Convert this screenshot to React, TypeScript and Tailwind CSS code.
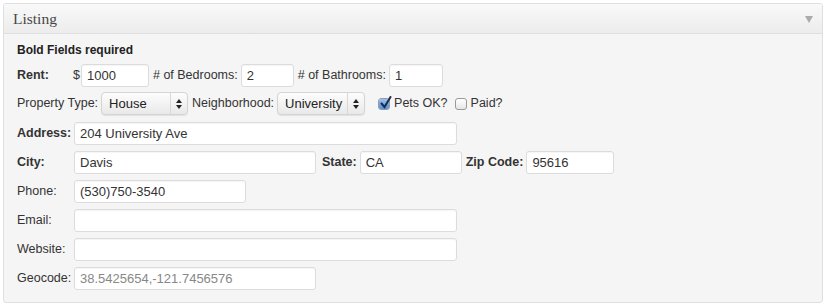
import React from 'react';

const font = { fontFamily: '"Liberation Sans", Arial, sans-serif' };

function Field({ value, className, muted }: { value?: string; className: string; muted?: boolean }) {
  return (
    <input
      readOnly
      defaultValue={value ?? ''}
      className={`h-[23px] rounded-[3px] border border-[#dcdcdc] bg-white px-[5px] text-[13px] outline-none shadow-[inset_0_1px_1px_rgba(0,0,0,0.04)] ${
        muted ? 'text-[#888]' : 'text-[#333]'
      } ${className}`}
      style={font}
    />
  );
}

function FakeSelect({ value, className }: { value: string; className: string }) {
  return (
    <div
      className={`flex h-[23px] items-stretch rounded-[4px] border border-[#d4d4d4] bg-gradient-to-b from-[#fdfdfd] to-[#e9e9e9] shadow-[0_1px_1px_rgba(0,0,0,0.08)] ${className}`}
    >
      <span className="flex flex-1 items-center pl-[7px] text-[13px] text-[#222]">{value}</span>
      <span className="flex w-[17px] items-center justify-center border-l border-[#d8d8d8]">
        <svg width="6" height="10" viewBox="0 0 6 10">
          <path d="M3 0 L6 4 H0 Z M3 10 L6 6 H0 Z" fill="#222" />
        </svg>
      </span>
    </div>
  );
}

function Check({ checked }: { checked?: boolean }) {
  return (
    <span className="relative inline-flex h-[12px] w-[12px] rounded-[3px] border border-[#9a9a9a] bg-gradient-to-b from-white to-[#e6e6e6]">
      {checked && (
        <>
          <span className="absolute inset-0 rounded-[2px] bg-gradient-to-b from-[#9ac2f0] to-[#4f8ee0]" />
          <svg className="absolute left-[1px] top-[-3px]" width="12" height="13" viewBox="0 0 12 13">
            <path d="M1.5 7.5 L4.5 11 L10.5 1" stroke="#1d2b4a" strokeWidth="2" fill="none" strokeLinecap="round" />
          </svg>
        </>
      )}
    </span>
  );
}

function Label({ children, bold }: { children: React.ReactNode; bold?: boolean }) {
  return <span className={`w-[57px] shrink-0 ${bold ? 'font-bold' : ''}`}>{children}</span>;
}

export default function App() {
  return (
    <div className="h-[307px] w-[827px] bg-white p-[3px] pr-[4px] text-[12.5px] text-[#333]" style={font}>
      <div className="h-[300px] overflow-hidden rounded-[3px] border border-[#dfdfdf] bg-[#f5f5f5]">
        <div className="flex h-[30px] items-center justify-between border-b border-[#dfdfdf] bg-gradient-to-b from-[#f9f9f9] to-[#ececec] pl-[9px] pr-[9px]">
          <span className="text-[15.5px] text-[#464646]" style={{ fontFamily: '"Liberation Serif", "Times New Roman", serif' }}>
            Listing
          </span>
          <svg width="8" height="7" viewBox="0 0 8 7" className="mt-[1px]">
            <path d="M0 0 H8 L4 7 Z" fill="#aaa" />
          </svg>
        </div>

        <div className="flex flex-col gap-[6px] px-[13px] pt-[9px]">
          <div className="text-[12px] font-bold leading-[14px] text-[#222]">Bold Fields required</div>

          <div className="mt-[1px] flex items-center">
            <span className="w-[56px] shrink-0 font-bold">Rent:</span>
            <span className="mr-[1px]">$</span>
            <Field value="1000" className="w-[68px]" />
            <span className="ml-[4px] mr-[3px]"># of Bedrooms:</span>
            <Field value="2" className="w-[53px]" />
            <span className="ml-[4px] mr-[3px]"># of Bathrooms:</span>
            <Field value="1" className="w-[54px]" />
          </div>

          <div className="mt-[-1px] flex items-center">
            <span className="mr-[3px]">Property Type:</span>
            <FakeSelect value="House" className="w-[87px]" />
            <span className="ml-[4px] mr-[3px]">Neighborhood:</span>
            <FakeSelect value="University" className="w-[88px]" />
            <span className="ml-[13px] flex items-center">
              <Check checked />
              <span className="ml-[4px]">Pets OK?</span>
            </span>
            <span className="ml-[7px] flex items-center">
              <Check />
              <span className="ml-[4px]">Paid?</span>
            </span>
          </div>

          <div className="mt-[1px] flex items-center">
            <Label bold>Address:</Label>
            <Field value="204 University Ave" className="w-[383px]" />
          </div>

          <div className="flex items-center">
            <Label bold>City:</Label>
            <Field value="Davis" className="w-[242px]" />
            <span className="ml-[6px] mr-[3px] font-bold">State:</span>
            <Field value="CA" className="w-[102px]" />
            <span className="ml-[4px] mr-[3px] font-bold">Zip Code:</span>
            <Field value="95616" className="w-[88px]" />
          </div>

          <div className="flex items-center">
            <Label>Phone:</Label>
            <Field value="(530)750-3540" className="w-[172px]" />
          </div>

          <div className="flex items-center">
            <Label>Email:</Label>
            <Field className="w-[383px]" />
          </div>

          <div className="flex items-center">
            <Label>Website:</Label>
            <Field className="w-[383px]" />
          </div>

          <div className="flex items-center">
            <Label>Geocode:</Label>
            <Field value="38.5425654,-121.7456576" className="w-[242px]" muted />
          </div>
        </div>
      </div>
    </div>
  );
}
